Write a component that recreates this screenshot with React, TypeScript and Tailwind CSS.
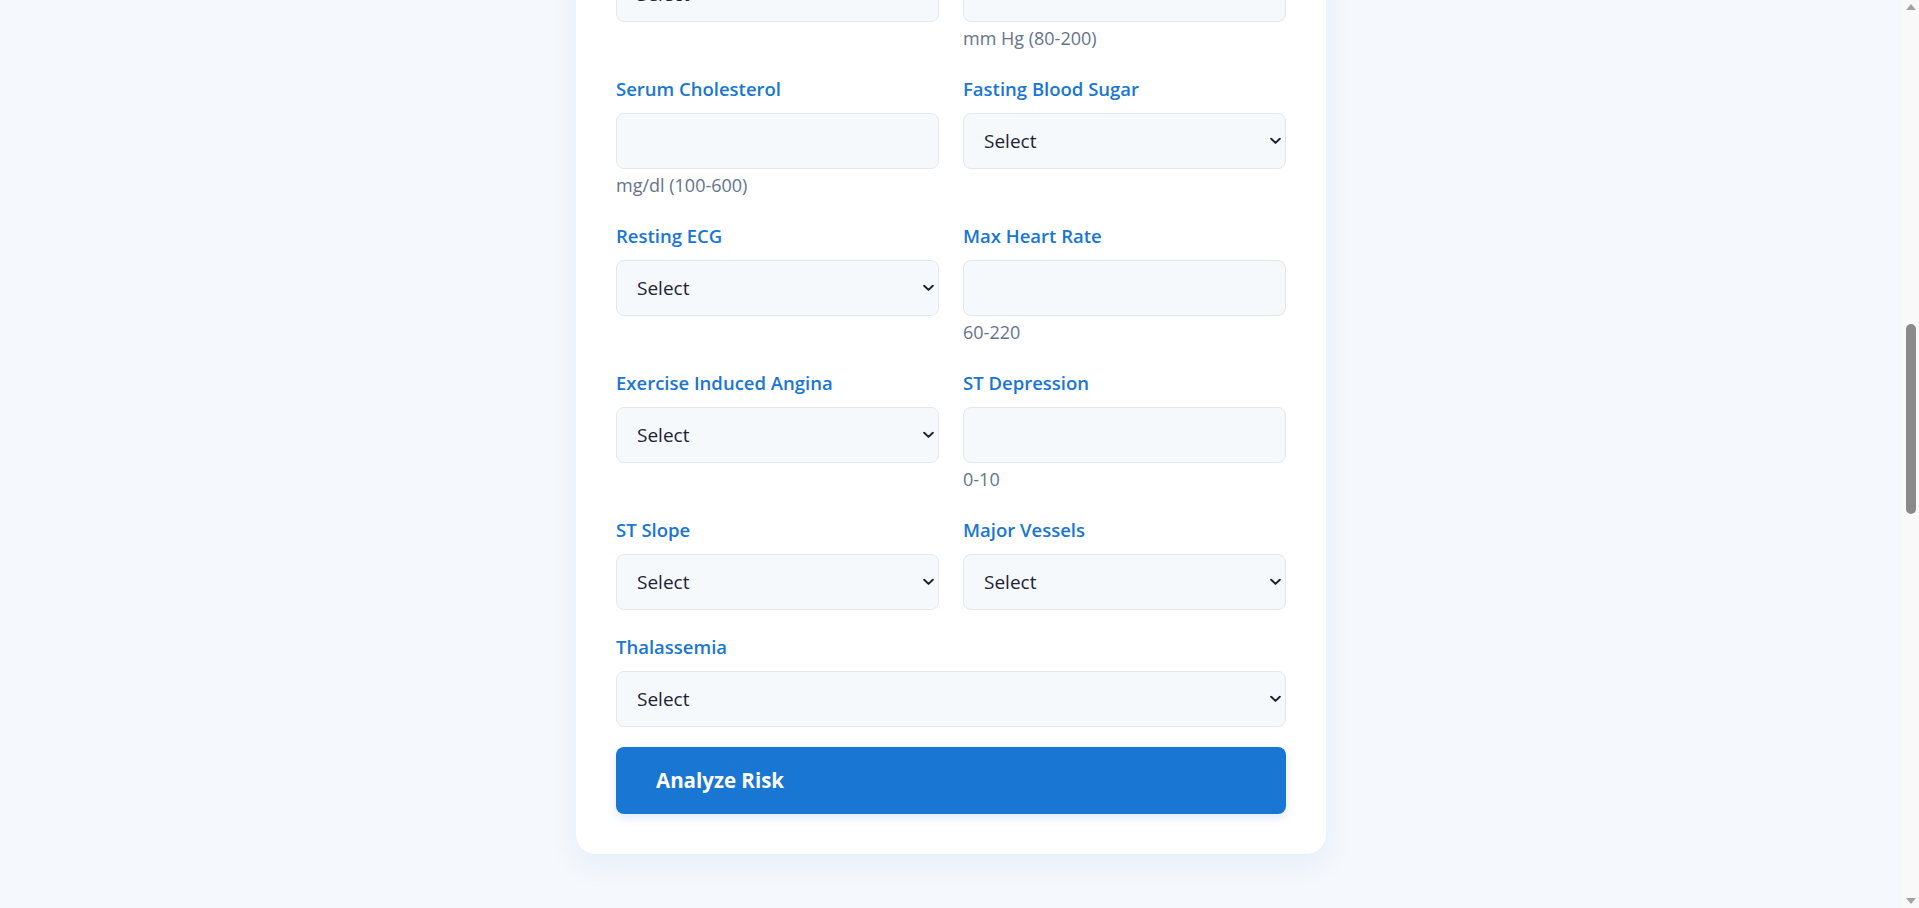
import { useLayoutEffect, useRef, type ReactNode } from "react";

function Label({ children }: { children: ReactNode }) {
  return (
    <label className="mb-3 block text-[18.5px] font-semibold leading-6 text-[#1976d2]">
      {children}
    </label>
  );
}

function Helper({ children }: { children: ReactNode }) {
  return <p className="mb-[6px] mt-[5px] text-[18px] leading-[22px] text-[#64748b]">{children}</p>;
}

function Chevron() {
  return (
    <svg
      className="pointer-events-none absolute right-[5px] top-1/2 -translate-y-1/2"
      width="11"
      height="7"
      viewBox="0 0 11 7"
      fill="none"
    >
      <path d="M1.2 1.2 L5.5 5.4 L9.8 1.2" stroke="#1e2235" strokeWidth="2" strokeLinecap="round" strokeLinejoin="round" />
    </svg>
  );
}

function SelectField({ label, options, wide }: { label: string; options: string[]; wide?: boolean }) {
  return (
    <div className={wide ? "col-span-2 mt-[3px]" : ""}>
      <Label>{label}</Label>
      <div className="relative">
        <select
          defaultValue=""
          className="h-14 w-full appearance-none rounded-lg border border-[#e2e8f0] bg-[#f6f9fc] px-5 text-[19px] text-[#1e2235] outline-none"
        >
          <option value="">Select</option>
          {options.map((o) => (
            <option key={o} value={o}>
              {o}
            </option>
          ))}
        </select>
        <Chevron />
      </div>
    </div>
  );
}

function InputField({
  label,
  helper,
  inputRef,
}: {
  label: string;
  helper: string;
  inputRef?: React.Ref<HTMLInputElement>;
}) {
  return (
    <div>
      <Label>{label}</Label>
      <input
        ref={inputRef}
        type="number"
        className="h-14 w-full rounded-lg border border-[#e2e8f0] bg-[#f6f9fc] px-5 text-[19px] text-[#1e2235] outline-none"
      />
      <Helper>{helper}</Helper>
    </div>
  );
}

function FakeScrollbar() {
  return (
    <div aria-hidden className="fixed right-0 top-0 flex h-screen w-[17px] flex-col bg-[#f9f9f9]">
      <div className="flex h-[17px] items-center justify-center pb-[3px]">
        <svg width="10" height="6" viewBox="0 0 10 6">
          <path d="M0 6 L5 0 L10 6 Z" fill="#a3a3a3" />
        </svg>
      </div>
      <div className="flex-1">
        <div className="mx-auto mt-[307px] h-[190px] w-[10px] rounded-full bg-[#8a8a8a]" />
      </div>
      <div className="flex h-[17px] items-center justify-center pt-[3px]">
        <svg width="10" height="6" viewBox="0 0 10 6">
          <path d="M0 0 L5 6 L10 0 Z" fill="#a3a3a3" />
        </svg>
      </div>
    </div>
  );
}

export default function App() {
  const anchor = useRef<HTMLInputElement>(null);

  useLayoutEffect(() => {
    const align = () => {
      const el = anchor.current;
      if (!el) return;
      const top = el.getBoundingClientRect().top + window.scrollY;
      window.scrollTo(0, Math.round(top - 113));
    };
    align();
    requestAnimationFrame(align);
  }, []);

  return (
    <div className="min-h-[4200px] bg-[#f5f8fc] pr-[17px] font-['Open_Sans',sans-serif] text-[#1e2235]">
      <header className="mx-auto max-w-[750px] px-4 pb-10 pt-16 text-center">
        <h1 className="text-4xl font-bold text-[#1976d2]">Heart Disease Risk Predictor</h1>
        <p className="mt-4 text-lg text-[#64748b]">
          Enter the patient's clinical information below to estimate the risk of heart disease.
        </p>
      </header>

      <section className="mx-auto mb-10 max-w-[750px] rounded-[20px] bg-white p-10 shadow-[0_10px_30px_rgba(25,118,210,0.08)]">
        <h2 className="mb-3 text-2xl font-bold text-[#1e293b]">How it works</h2>
        <p className="text-[16px] leading-7 text-[#64748b]">
          Fill in the fourteen clinical attributes from the patient's examination. The model analyses the values
          and returns an estimated probability of heart disease along with the key contributing factors.
        </p>
        <div className="mt-6 grid grid-cols-3 gap-4">
          {["Enter data", "Analyze", "Review result"].map((s, i) => (
            <div key={s} className="flex h-[420px] flex-col rounded-xl bg-[#f6f9fc] p-5">
              <span className="text-3xl font-bold text-[#1976d2]">{i + 1}</span>
              <span className="mt-2 font-semibold">{s}</span>
            </div>
          ))}
        </div>
      </section>

      <main className="mx-auto w-[750px] rounded-[20px] bg-white p-10 shadow-[0_10px_30px_rgba(25,118,210,0.08)]">
        <h2 className="mb-8 text-2xl font-bold text-[#1e293b]">Patient Information</h2>
        <form className="grid grid-cols-2 gap-x-6 gap-y-[22px]" onSubmit={(e) => e.preventDefault()}>
          <InputField label="Age" helper="Years (20-100)" />
          <SelectField label="Sex" options={["Male", "Female"]} />
          <SelectField
            label="Chest Pain Type"
            options={["Typical Angina", "Atypical Angina", "Non-anginal Pain", "Asymptomatic"]}
          />
          <InputField label="Resting Blood Pressure" helper="mm Hg (80-200)" />
          <InputField label="Serum Cholesterol" helper="mg/dl (100-600)" inputRef={anchor} />
          <SelectField label="Fasting Blood Sugar" options={["> 120 mg/dl", "≤ 120 mg/dl"]} />
          <SelectField
            label="Resting ECG"
            options={["Normal", "ST-T Wave Abnormality", "Left Ventricular Hypertrophy"]}
          />
          <InputField label="Max Heart Rate" helper="60-220" />
          <SelectField label="Exercise Induced Angina" options={["Yes", "No"]} />
          <InputField label="ST Depression" helper="0-10" />
          <SelectField label="ST Slope" options={["Upsloping", "Flat", "Downsloping"]} />
          <SelectField label="Major Vessels" options={["0", "1", "2", "3"]} />
          <SelectField label="Thalassemia" options={["Normal", "Fixed Defect", "Reversible Defect"]} wide />
          <button
            type="submit"
            className="col-span-2 -mt-[2px] h-[67px] rounded-lg bg-[#1976d2] px-10 text-left text-[20.5px] font-bold text-white shadow-[0_4px_10px_rgba(25,118,210,0.15)]"
          >
            Analyze Risk
          </button>
        </form>
      </main>
      <FakeScrollbar />
    </div>
  );
}
